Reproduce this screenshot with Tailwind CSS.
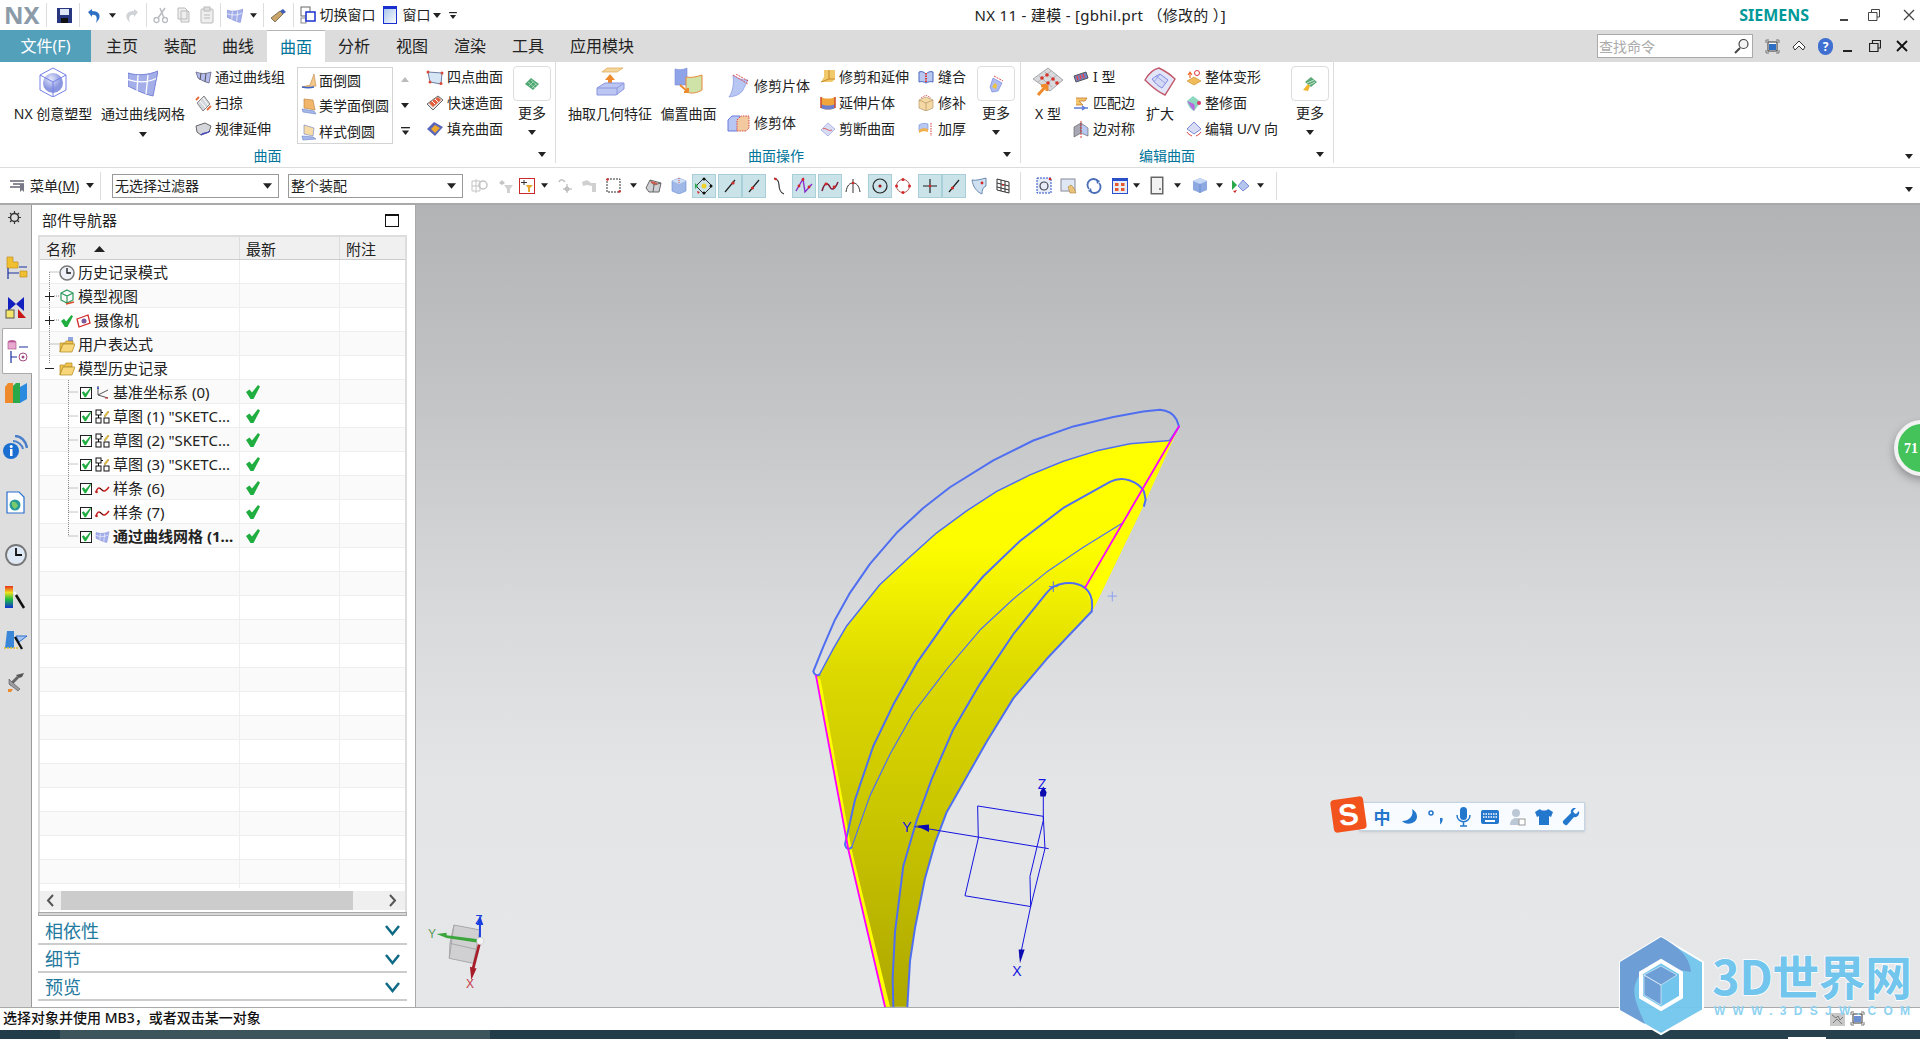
<!DOCTYPE html>
<html lang="zh-CN">
<head>
<meta charset="UTF-8">
<title>NX 11 - 建模</title>
<script src="https://cdn.jsdelivr.net/npm/@tailwindcss/browser@4"></script>
</head>
<body class="bg-white">
<svg class="hidden" width="0" height="0">
  <defs>
    <symbol id="caret" viewBox="0 0 8 5"><polygon points="0,0 8,0 4,5" fill="#222"/></symbol>
    <symbol id="caretbar" viewBox="0 0 10 9"><rect x="0" y="0" width="10" height="1.5" fill="#222"/><polygon points="1,4 9,4 5,9" fill="#222"/></symbol>
    <symbol id="tick" viewBox="0 0 14 14"><path d="M0 7l3.500-2.500 2.500 3L12 0l2 1.500L7.500 14H4.500z" fill="#1fae3f"/></symbol>
    <symbol id="box" viewBox="0 0 13 13"><rect x=".5" y=".5" width="12" height="12" fill="#fff" stroke="#111"/><path d="M2 6l2-1.500 2 2.500 5-6 1 1-5.500 9H5z" fill="#1fae3f"/></symbol>
    <symbol id="sketch" viewBox="0 0 15 15"><rect x="1" y="1" width="5" height="5" fill="#fff" stroke="#111"/><rect x="1" y="9" width="5" height="5" fill="#fff" stroke="#111"/><rect x="9" y="9" width="5" height="5" fill="#fff" stroke="#111"/><path d="M6 3.500h2M3.500 6v3" stroke="#111"/><path d="M9 7l4-5 1 1-4 5z" fill="#e8c23a" stroke="#a5841a" stroke-width=".5"/></symbol>
    <symbol id="spline" viewBox="0 0 15 15"><path d="M1 11c2-6 4-4 6-2s4 1 7-3" fill="none" stroke="#c62222" stroke-width="1.500"/><circle cx="1.500" cy="11" r="1.300" fill="#c62222"/><path d="M5 7l3 3" stroke="#222"/></symbol>
    <symbol id="mesh" viewBox="0 0 30 30"><path d="M0 6c10 3 20 2 30-2l-5 25C16 27 8 23 0 19z" fill="#a4afea" stroke="#7783d6"/><path d="M10 8l-1 16M20 8l-2 19M0 12.500c9 3 18 4 28-1" stroke="#fff" fill="none" stroke-width="1.300"/></symbol>
    <symbol id="greenchip" viewBox="0 0 16 16"><path d="M1 8l6-6 8 6-6 6z" fill="#4fa872"/><path d="M4 6l7 6M7 4l6 5M5 10l4-4M8 12l4-4" stroke="#b6dfc6" stroke-width=".8"/></symbol>
    <symbol id="tbline" viewBox="0 0 16 16"><path d="M3 14L13 2" stroke="#222" stroke-width="1.200"/><circle cx="11" cy="5" r="1.600" fill="#d62828"/></symbol>
    <symbol id="tbline2" viewBox="0 0 16 16"><path d="M3 14L13 2" stroke="#222" stroke-width="1.200"/><circle cx="6.500" cy="10" r="1.600" fill="#d62828"/></symbol>
  </defs>
</svg>

<div class="relative w-[1920px] h-[1039px] overflow-hidden flex flex-col text-[#222] font-['Noto_Sans','Noto_Sans_CJK_SC',sans-serif]">

  <!-- title bar -->
  <div class="h-[30px] flex items-center shrink-0 bg-white">
    <span class="ml-[4px] mr-[6px] text-[24px] leading-[28px] font-bold text-[#8c9ba8]">NX</span>
    <i class="w-px h-[24px] bg-[#ddd]"></i>
    <svg class="ml-[10px] w-[15px] h-[15px]" viewBox="0 0 15 15"><rect width="15" height="15" fill="#27367f"/><rect x="3" y="1" width="9" height="6" fill="#dfe6f6"/><rect x="4" y="10" width="7" height="5" fill="#111"/></svg>
    <i class="ml-[7px] w-px h-[24px] bg-[#ddd]"></i>
    <svg class="ml-[7px] w-[14px] h-[15px]" viewBox="0 0 14 15"><path d="M1 4l4-3v2c6 0 9 3 7 8l-3 4c2-6 0-9-4-8v2z" fill="#2d6fc4"/></svg>
    <svg class="ml-[8px] w-[7px] h-[5px]"><use href="#caret"/></svg>
    <svg class="ml-[9px] w-[14px] h-[15px]" viewBox="0 0 14 15"><path d="M13 4L9 1v2C3 3 0 6 2 11l3 4C3 9 5 6 9 7v2z" fill="#cfd2d6"/></svg>
    <i class="ml-[7px] w-px h-[24px] bg-[#ddd]"></i>
    <svg class="ml-[6px] w-[15px] h-[17px]" viewBox="0 0 15 17"><path d="M12 1L5 11M7 1l4 10" stroke="#b9bcc0" stroke-width="1.500"/><circle cx="3.500" cy="13" r="2.500" fill="none" stroke="#b9bcc0" stroke-width="1.300"/><circle cx="12" cy="13" r="2.500" fill="none" stroke="#b9bcc0" stroke-width="1.300"/></svg>
    <svg class="ml-[9px] w-[13px] h-[16px]" viewBox="0 0 13 16"><path d="M1 1h7l2 2v9H1zM4 4h7l1 1v10H4z" fill="#eee" stroke="#bbb"/></svg>
    <svg class="ml-[10px] w-[14px] h-[18px]" viewBox="0 0 14 18"><rect x="1" y="3" width="12" height="14" rx="1" fill="#eee" stroke="#bbb"/><rect x="4" y="1" width="6" height="4" fill="#ddd" stroke="#bbb"/><path d="M4 9h6M4 12h6" stroke="#bbb"/></svg>
    <i class="ml-[6px] w-px h-[24px] bg-[#ddd]"></i>
    <svg class="ml-[6px] w-[16px] h-[16px]"><use href="#mesh"/></svg>
    <svg class="ml-[7px] w-[7px] h-[5px]"><use href="#caret"/></svg>
    <i class="ml-[6px] w-px h-[24px] bg-[#ddd]"></i>
    <svg class="ml-[6px] w-[17px] h-[15px]" viewBox="0 0 17 15"><path d="M1 10l9-7 3 3-8 8z" fill="#c9a56a" stroke="#6a5a44" stroke-width=".8"/><path d="M10 3l3-2 3 3-3 2z" fill="#3f5fb5"/></svg>
    <i class="ml-[6px] w-px h-[24px] bg-[#ddd]"></i>
    <svg class="ml-[6px] w-[16px] h-[18px]" viewBox="0 0 16 18"><rect x="1" y="1" width="9" height="9" fill="#fff" stroke="#666"/><rect x="1" y="12" width="5" height="5" fill="#fff" stroke="#888"/><rect x="6" y="6" width="9" height="9" fill="#fff" stroke="#1a2fd0" stroke-width="1.500"/></svg>
    <span class="ml-[4px] text-[14px] leading-none">切换窗口</span>
    <svg class="ml-[7px] w-[14px] h-[18px]" viewBox="0 0 14 18"><defs><linearGradient id="wg" x1="0" y1="0" x2="1" y2="1"><stop offset="0" stop-color="#9fc0e8"/><stop offset="1" stop-color="#fff"/></linearGradient></defs><rect x=".5" y=".5" width="13" height="17" fill="url(#wg)" stroke="#1a2fd0"/><rect x="0" y="0" width="14" height="3" fill="#1a2fd0"/></svg>
    <span class="ml-[6px] text-[14px] leading-none">窗口</span>
    <svg class="ml-[2px] w-[8px] h-[5px]"><use href="#caret"/></svg>
    <svg class="ml-[8px] w-[8px] h-[7px]"><use href="#caretbar"/></svg>
    <span class="ml-[518px] text-[15px] leading-none tracking-[.3px] whitespace-nowrap">NX 11 - 建模 - [gbhil.prt （修改的 ）]</span>
    <span class="ml-auto text-[16px] leading-none font-bold text-[#009999]">SIEMENS</span>
    <i class="ml-[31px] mt-[10px] w-[8px] h-[2px] bg-[#444]"></i>
    <svg class="ml-[20px] w-[12px] h-[12px]" viewBox="0 0 12 12"><path d="M3.500 3V.5h8V8H9M.5 3.500h8.500V11.500H.5z" fill="none" stroke="#444"/></svg>
    <svg class="ml-[23px] mr-[5px] w-[12px] h-[12px]" viewBox="0 0 12 12"><path d="M1 1l10 10M11 1L1 11" stroke="#444" stroke-width="1.300"/></svg>
  </div>

  <!-- tabs -->
  <div class="h-[32px] flex items-center shrink-0 bg-[#dcdcdc] text-[16px]">
    <div class="w-[91px] h-full bg-[#53a0bb] text-white flex items-center justify-center">文件(F)</div>
    <div class="ml-[2px] flex h-full">
      <div class="w-[58px] flex items-center justify-center">主页</div>
      <div class="w-[58px] flex items-center justify-center">装配</div>
      <div class="w-[58px] flex items-center justify-center">曲线</div>
      <div class="w-[58px] flex items-center justify-center bg-white text-[#00749a] border-t border-[#b5b5b5]">曲面</div>
      <div class="w-[58px] flex items-center justify-center">分析</div>
      <div class="w-[58px] flex items-center justify-center">视图</div>
      <div class="w-[58px] flex items-center justify-center">渲染</div>
      <div class="w-[58px] flex items-center justify-center">工具</div>
      <div class="w-[90px] flex items-center justify-center">应用模块</div>
    </div>
    <div class="ml-auto w-[156px] h-[24px] bg-white border border-[#aaa] flex items-center text-[14px] text-[#aaa] pl-[1px]">查找命令
      <svg class="ml-auto mr-[3px] w-[15px] h-[16px]" viewBox="0 0 15 16"><circle cx="9.500" cy="6" r="4.500" fill="#f4f4f4" stroke="#444" stroke-width="1.200"/><path d="M6 10l-5 5" stroke="#444" stroke-width="2"/></svg>
    </div>
    <svg class="ml-[12px] w-[15px] h-[15px]" viewBox="0 0 15 15"><path d="M1 4V1h3M11 1h3v3M1 11v3h3M14 11v3h-3" fill="none" stroke="#777"/><rect x="3" y="3" width="9" height="9" fill="#fff" stroke="#333"/><rect x="4" y="5" width="7" height="6" fill="#2d6fc4"/></svg>
    <svg class="ml-[12px] w-[14px] h-[12px]" viewBox="0 0 14 12"><path d="M1 7l6-6 6 6-2 3-4-4-4 4z" fill="#fff" stroke="#333"/></svg>
    <span class="ml-[12px] w-[15px] h-[17px] rounded-full bg-[#3f6fd0] text-white text-[12px] leading-[17px] font-bold text-center">?</span>
    <i class="ml-[10px] mt-[10px] w-[9px] h-[2px] bg-[#222]"></i>
    <svg class="ml-[17px] w-[12px] h-[12px]" viewBox="0 0 12 12"><path d="M3.500 3V.5h8V8H9M.5 3.500h8.500V11.500H.5z" fill="none" stroke="#222" stroke-width="1.200"/></svg>
    <svg class="ml-[15px] mr-[12px] w-[12px] h-[12px]" viewBox="0 0 12 12"><path d="M1 1l10 10M11 1L1 11" stroke="#111" stroke-width="1.800"/></svg>
  </div>

  <!-- ribbon -->
  <div class="h-[106px] shrink-0 flex bg-white border-b border-[#dcdcdc] text-[14px] leading-none relative">
    <!-- group: 曲面 -->
    <div class="w-[556px] shrink-0 flex flex-col border-r border-[#ddd] mb-[4px]">
      <div class="h-[85px] flex">
        <div class="ml-[13px] w-[80px] flex flex-col items-center pt-[5px]">
          <svg class="w-[30px] h-[30px]" viewBox="0 0 30 30"><defs><radialGradient id="ball" cx=".4" cy=".3"><stop offset="0" stop-color="#e4e7fb"/><stop offset="1" stop-color="#8a97e0"/></radialGradient></defs><circle cx="15" cy="16" r="10" fill="url(#ball)"/><path d="M15 1l13 7v15l-13 7-13-7V8zM2 8l13 7 13-7M15 15v15" fill="none" stroke="#7480e6"/></svg>
          <span class="mt-[10px]">NX 创意塑型</span>
        </div>
        <div class="ml-[8px] w-[84px] flex flex-col items-center pt-[5px]">
          <svg class="w-[30px] h-[30px]"><use href="#mesh"/></svg>
          <span class="mt-[10px] whitespace-nowrap">通过曲线网格</span>
          <svg class="mt-[11px] w-[8px] h-[5px]"><use href="#caret"/></svg>
        </div>
        <div class="ml-[10px] w-[102px] flex flex-col pt-[2px]">
          <div class="h-[26px] flex items-center gap-[3px]"><svg class="w-[17px] h-[14px]" viewBox="0 0 17 14"><path d="M1 2c5 2 10 2 15 0l-2 11c-4-1-8-3-11-5z" fill="#b4bced" stroke="#7a7a9a"/><path d="M6 3L5 10M11 3l-1 9" stroke="#555" fill="none"/></svg>通过曲线组</div>
          <div class="h-[26px] flex items-center gap-[3px]"><svg class="w-[17px] h-[17px]" viewBox="0 0 17 17"><path d="M2 8l7-7 6 8-7 7z" fill="#d4d6de" stroke="#888"/><path d="M5 6l6 7M8 3l5 7" stroke="#fff"/><path d="M1 5l3-3M12 15l4-4" stroke="#e8693a" stroke-width="1.800"/></svg>扫掠</div>
          <div class="h-[26px] flex items-center gap-[3px]"><svg class="w-[17px] h-[14px]" viewBox="0 0 17 14"><path d="M1 4l9-3 6 3-2 6-8 3-4-3z" fill="#d5d6dc" stroke="#666"/><path d="M6 13c3-3 6-1 9-4" stroke="#4a4ac0" fill="none" stroke-width="1.300"/></svg>规律延伸</div>
        </div>
        <div class="mt-[5px] w-[96px] h-[77px] border border-[#d4d4d4] px-[3px] flex flex-col">
          <div class="h-[25px] shrink-0 flex items-center gap-[2px]"><svg class="w-[16px] h-[16px]" viewBox="0 0 16 16"><path d="M1 14l8-2 4-11 2 12z" fill="#f4c78a" stroke="#b98a4a" stroke-width=".6"/><path d="M1 14c4 1 8 1 12 0" stroke="#3f66c4" stroke-width="1.500" fill="none"/></svg>面倒圆</div>
          <div class="h-[26px] shrink-0 flex items-center gap-[2px] whitespace-nowrap"><svg class="w-[16px] h-[17px]" viewBox="0 0 16 17"><path d="M3 1l9 1 2 10-11-2z" fill="#f2b66b" stroke="#b57a33" stroke-width=".6"/><path d="M1 11l12 2 2 3-13-2z" fill="#a5b9ea" stroke="#6b82c8" stroke-width=".6"/></svg>美学面倒圆</div>
          <div class="h-[26px] shrink-0 flex items-center gap-[2px]"><svg class="w-[16px] h-[17px]" viewBox="0 0 16 17"><path d="M3 1l10 3-1 8-9-2z" fill="#f7dca5" stroke="#6b82c8" stroke-width=".6"/><path d="M1 12l11 1 3 2-13 1z" fill="#a5b9ea" stroke="#6b82c8" stroke-width=".6"/></svg>样式倒圆</div>
        </div>
        <div class="ml-[5px] w-[14px] flex flex-col items-center pt-[15px]">
          <svg class="w-[8px] h-[5px]" viewBox="0 0 8 5"><polygon points="0,5 8,5 4,0" fill="#bbb"/></svg>
          <svg class="mt-[21px] w-[8px] h-[5px]"><use href="#caret"/></svg>
          <svg class="mt-[19px] w-[9px] h-[8px]"><use href="#caretbar"/></svg>
        </div>
        <div class="ml-[14px] w-[80px] flex flex-col pt-[2px]">
          <div class="h-[26px] flex items-center gap-[3px] whitespace-nowrap"><svg class="w-[18px] h-[15px]" viewBox="0 0 18 15"><path d="M2 2l14 1-1 11-11-2z" fill="#d7e6f5" stroke="#6c7fa8"/><g fill="#d94a3a"><circle cx="2" cy="2" r="1.500"/><circle cx="16" cy="3" r="1.500"/><circle cx="15" cy="13.500" r="1.500"/><circle cx="4" cy="12" r="1.500"/></g></svg>四点曲面</div>
          <div class="h-[26px] flex items-center gap-[3px] whitespace-nowrap"><svg class="w-[18px] h-[16px]" viewBox="0 0 18 16"><path d="M1 9l11-8 5 4-10 10z" fill="#e5e5e5" stroke="#666"/><path d="M3 8l9-6 3 3-8 7z" fill="#e2603f"/><path d="M6 6l3 3M9 4l3 3" stroke="#fff"/></svg>快速造面</div>
          <div class="h-[26px] flex items-center gap-[3px] whitespace-nowrap"><svg class="w-[18px] h-[16px]" viewBox="0 0 18 16"><path d="M1 8l7-7 9 5-8 9z" fill="#5b66b8"/><path d="M5 8l4-4 5 3-5 5z" fill="#efa92c"/></svg>填充曲面</div>
        </div>
        <div class="ml-[7px] w-[38px] flex flex-col items-center pt-[4px]">
          <div class="w-[38px] h-[35px] border border-[#ddd] rounded-[4px] flex items-center justify-center"><svg class="w-[16px] h-[16px]"><use href="#greenchip"/></svg></div>
          <span class="mt-[5px] whitespace-nowrap">更多</span>
          <svg class="mt-[10px] w-[8px] h-[5px]"><use href="#caret"/></svg>
        </div>
      </div>
      <div class="flex-1 relative flex items-center justify-center text-[#00749a] pt-[4px] pr-[20px]">曲面<svg class="absolute left-[538px] top-[7px] w-[8px] h-[5px]"><use href="#caret"/></svg></div>
    </div>

    <!-- group: 曲面操作 -->
    <div class="w-[465px] shrink-0 flex flex-col border-r border-[#ddd] mb-[4px]">
      <div class="h-[85px] flex">
        <div class="ml-[12px] w-[84px] flex flex-col items-center pt-[5px]">
          <svg class="w-[30px] h-[30px]" viewBox="0 0 30 30"><path d="M7 5l5-4h16l-6 4z" fill="#f4d79a" stroke="#e0a050" stroke-width=".7"/><path d="M15 7l5 6h-3v7h-4v-7h-3z" fill="#ef8a2c"/><path d="M2 21l8-5h19v6l-8 6H2z" fill="#bcc6f2" stroke="#8a96e0"/><path d="M2 21h20l7-5M22 21v7" stroke="#8a96e0" fill="none"/></svg>
          <span class="mt-[10px] whitespace-nowrap">抽取几何特征</span>
        </div>
        <div class="ml-[9px] w-[55px] flex flex-col items-center pt-[5px]">
          <svg class="w-[30px] h-[30px]" viewBox="0 0 30 30"><path d="M1 2c4 1 8 1 12-1v17H1z" fill="#8fa3e8" stroke="#7a8ad8" stroke-width=".6"/><path d="M12 10c5 1 10 0 16-2v15c-5 3-10 4-16 2z" fill="#cfe3a8" stroke="#e8863a"/><path d="M6 18l8 7M14 25v-4M14 25h-4" stroke="#ef8a2c" stroke-width="2" fill="none"/></svg>
          <span class="mt-[10px] whitespace-nowrap">偏置曲面</span>
        </div>
        <div class="ml-[11px] w-[84px] flex flex-col pt-[11px] gap-[11px]">
          <div class="h-[26px] flex items-center gap-[4px] whitespace-nowrap"><svg class="w-[23px] h-[24px]" viewBox="0 0 23 24"><path d="M6 1c3 3 9 5 15 5l-4 8c-2 5-6 8-15 9 4-6 5-14 4-22z" fill="#b8c6f4" stroke="#7a8ad8" stroke-width=".6"/><path d="M6 1l15 9M9 0l12 7" stroke="#e04a4a" stroke-dasharray="2 1"/></svg>修剪片体</div>
          <div class="h-[26px] flex items-center gap-[4px] whitespace-nowrap"><svg class="w-[23px] h-[17px]" viewBox="0 0 23 17"><path d="M1 5l4-4h8v12l-3 3H1z" fill="#b8c6f4" stroke="#6a7ad8"/><path d="M10 5l4-4h8v12l-3 3h-9z" fill="#f3c9a0" stroke="#d04a4a" stroke-dasharray="1.500 1"/></svg>修剪体</div>
        </div>
        <div class="ml-[9px] w-[90px] flex flex-col pt-[2px]">
          <div class="h-[26px] flex items-center gap-[3px] whitespace-nowrap"><svg class="w-[16px] h-[16px]" viewBox="0 0 16 16"><path d="M4 1h11v9l-3 3H1l3-5z" fill="#f0c96b"/><path d="M9 1v9M1 13l8-3 6 0" stroke="#c88a2a" fill="none"/></svg>修剪和延伸</div>
          <div class="h-[26px] flex items-center gap-[3px] whitespace-nowrap"><svg class="w-[16px] h-[16px]" viewBox="0 0 16 16"><path d="M1 2c4 2 10 2 14 0v11c-4 2-10 2-14 0z" fill="#f0a63c"/><path d="M1 9c4 2 10 2 14 0v4c-4 2-10 2-14 0z" fill="#6b7fd0"/><path d="M1 2v11M15 2v11" stroke="#d04a2a" stroke-width="1.500"/></svg>延伸片体</div>
          <div class="h-[26px] flex items-center gap-[3px] whitespace-nowrap"><svg class="w-[16px] h-[15px]" viewBox="0 0 16 15"><path d="M1 8l7-7 7 6-7 7z" fill="#d8dcf4" stroke="#8a96d8" stroke-width=".6"/><path d="M3 7c3-2 5 3 9 1" stroke="#d85a5a" fill="none"/></svg>剪断曲面</div>
        </div>
        <div class="ml-[8px] w-[50px] flex flex-col pt-[2px]">
          <div class="h-[26px] flex items-center gap-[4px] whitespace-nowrap"><svg class="w-[16px] h-[14px]" viewBox="0 0 16 14"><path d="M1 2c3-1 5 0 7 2 2-2 4-3 7-2v10c-3-1-5 0-7 1-2-1-4-2-7-1z" fill="#b9c8f0" stroke="#4a6ac0"/><path d="M8 3v10" stroke="#d83a3a" stroke-width="2" stroke-dasharray="1.500 1"/></svg>缝合</div>
          <div class="h-[26px] flex items-center gap-[4px] whitespace-nowrap"><svg class="w-[16px] h-[16px]" viewBox="0 0 16 16"><path d="M1 5l7-3 7 3v8l-7 3-7-3z" fill="#f5d9a4" stroke="#a88a5a" stroke-width=".6"/><path d="M1 5l7 3 7-3M8 8v8" stroke="#a88a5a" fill="none" stroke-width=".6"/><path d="M3 3l5-3 5 3" stroke="#d83a3a" fill="none" stroke-dasharray="1 1"/></svg>修补</div>
          <div class="h-[26px] flex items-center gap-[4px] whitespace-nowrap"><svg class="w-[16px] h-[15px]" viewBox="0 0 16 15"><path d="M1 3c3-2 6-2 9-1v6c-3-1-6-1-9 1z" fill="#b9c8f0" stroke="#6a8ad0" stroke-width=".6"/><path d="M1 8c3-2 6-2 9-1v3c-3-1-6-1-9 1z" fill="#f0b04a"/><path d="M13 1v13" stroke="#d83a3a" stroke-dasharray="1.500 1"/></svg>加厚</div>
        </div>
        <div class="ml-[9px] w-[38px] flex flex-col items-center pt-[4px]">
          <div class="w-[38px] h-[35px] border border-[#ddd] rounded-[4px] flex items-center justify-center"><svg class="w-[16px] h-[18px]" viewBox="0 0 16 18"><path d="M5 3l9 5-4 8-6 1-2-5z" fill="#aebcf0" stroke="#6a7ad8" stroke-width=".6"/><path d="M6 1l9 5" stroke="#e04a4a" stroke-dasharray="2 1"/><path d="M4 12l3-4 2 2-1 4z" fill="#efc23a"/></svg></div>
          <span class="mt-[5px] whitespace-nowrap">更多</span>
          <svg class="mt-[10px] w-[8px] h-[5px]"><use href="#caret"/></svg>
        </div>
      </div>
      <div class="flex-1 relative flex items-center justify-center text-[#00749a] pt-[4px] pr-[24px]">曲面操作<svg class="absolute left-[447px] top-[7px] w-[8px] h-[5px]"><use href="#caret"/></svg></div>
    </div>

    <!-- group: 编辑曲面 -->
    <div class="w-[313px] shrink-0 flex flex-col border-r border-[#ddd] mb-[4px]">
      <div class="h-[85px] flex">
        <div class="ml-[11px] w-[32px] flex flex-col items-center pt-[5px]">
          <svg class="w-[32px] h-[30px]" viewBox="0 0 32 30"><path d="M1 12L16 1l15 12-13 11z" fill="#d7d9dd" stroke="#777" stroke-width=".6"/><path d="M7 9l13 11M13 5l12 11M6 15L19 4M12 19l13-11" stroke="#999" stroke-width=".6"/><g fill="#d8342a"><circle cx="10" cy="11" r="1.800"/><circle cx="15" cy="8" r="1.800"/><circle cx="21" cy="12" r="1.800"/><circle cx="16" cy="16" r="1.800"/><circle cx="25" cy="16" r="1.800"/></g><path d="M6 28l9-10M15 18l-6 1M15 18v6" stroke="#ef8a2c" stroke-width="3" fill="none"/></svg>
          <span class="mt-[10px] whitespace-nowrap">X 型</span>
        </div>
        <div class="ml-[9px] w-[64px] flex flex-col pt-[2px]">
          <div class="h-[26px] flex items-center gap-[4px] whitespace-nowrap"><svg class="w-[16px] h-[12px]" viewBox="0 0 16 12"><path d="M1 5l12-4 2 6-12 4z" fill="#7280c8" stroke="#555"/><path d="M4 5l1 4M7 4l1 4M10 3l1 4" stroke="#e04a4a" stroke-width="1.500"/></svg>I 型</div>
          <div class="h-[26px] flex items-center gap-[4px] whitespace-nowrap"><svg class="w-[16px] h-[16px]" viewBox="0 0 16 16"><path d="M3 3h11l-2 3H6l4 4H3" fill="#f2c46b" stroke="#c47a2a" stroke-width=".8"/><path d="M1 13h14M9 11l3 2-3 2" stroke="#5a7ad8" fill="none" stroke-width="1.500"/></svg>匹配边</div>
          <div class="h-[26px] flex items-center gap-[4px] whitespace-nowrap"><svg class="w-[16px] h-[17px]" viewBox="0 0 16 17"><path d="M1 6l7-4v10l-7 4z" fill="#a8a8b4" stroke="#555" stroke-width=".6"/><path d="M8 2l7 5v8l-7-3z" fill="#b9c8f0" stroke="#555" stroke-width=".6"/><path d="M8 0v17" stroke="#d83a3a" stroke-dasharray="2 1"/></svg>边对称</div>
        </div>
        <div class="ml-[7px] w-[32px] flex flex-col items-center pt-[5px]">
          <svg class="w-[32px] h-[30px]" viewBox="0 0 32 30"><path d="M1 13C5 6 10 2 15 1c6 3 12 7 16 11l-10 16C14 25 7 19 1 13z" fill="#e3e5f8" stroke="#c25a6a" stroke-width="1.400"/><path d="M8 12c4-3 6-4 8-5l8 6-6 8c-4-2-7-5-10-9z" fill="#d4d9f5" stroke="#7f8ae0"/><path d="M12 9l9 7M16 7l-6 8" stroke="#7f8ae0" stroke-width=".7"/></svg>
          <span class="mt-[10px] whitespace-nowrap">扩大</span>
        </div>
        <div class="ml-[10px] w-[96px] flex flex-col pt-[2px]">
          <div class="h-[26px] flex items-center gap-[3px] whitespace-nowrap"><svg class="w-[16px] h-[17px]" viewBox="0 0 16 17"><path d="M1 12l7-4 7 4-7 4z" fill="#f0bb58" stroke="#c88a2a" stroke-width=".6"/><path d="M4 9V4M2 6l2-3 2 3" stroke="#ef6a2c" fill="none" stroke-width="1.200"/><circle cx="11" cy="4" r="2.500" fill="none" stroke="#d83a3a"/></svg>整体变形</div>
          <div class="h-[26px] flex items-center gap-[3px] whitespace-nowrap"><svg class="w-[16px] h-[17px]" viewBox="0 0 16 17"><path d="M1 6l6-5 8 6-7 9c-4-2-6-5-7-10z" fill="#8fd8c0"/><path d="M1 6c2 3 4 6 7 10 1-3 1-5 0-7z" fill="#b56ae0"/><circle cx="13" cy="8" r="2" fill="#d83a6a"/></svg>整修面</div>
          <div class="h-[26px] flex items-center gap-[3px] whitespace-nowrap"><svg class="w-[16px] h-[17px]" viewBox="0 0 16 17"><path d="M1 8l7-7 7 7-7 5z" fill="#d8dcf4" stroke="#7a8ad8"/><path d="M1 11c1 2 3 3 5 4M15 11c-1 2-3 3-5 4" stroke="#d83a3a" fill="none"/></svg>编辑 U/V 向</div>
        </div>
        <div class="ml-[9px] w-[38px] flex flex-col items-center pt-[4px]">
          <div class="w-[38px] h-[35px] border border-[#ddd] rounded-[4px] flex items-center justify-center"><svg class="w-[16px] h-[16px]" viewBox="0 0 16 16"><path d="M3 6l6-5 6 5-6 5z" fill="#5ba878"/><path d="M5 7l7-3M7 9l6-3" stroke="#c0e4cc"/><path d="M1 14l5-6 2 2-2 5z" fill="#efb52c"/></svg></div>
          <span class="mt-[5px] whitespace-nowrap">更多</span>
          <svg class="mt-[10px] w-[8px] h-[5px]"><use href="#caret"/></svg>
        </div>
      </div>
      <div class="flex-1 relative flex items-center justify-center text-[#00749a] pt-[4px] pr-[20px]">编辑曲面<svg class="absolute left-[295px] top-[7px] w-[8px] h-[5px]"><use href="#caret"/></svg></div>
    </div>
    <svg class="absolute left-[1905px] top-[92px] w-[8px] h-[5px]"><use href="#caret"/></svg>
  </div>

  <!-- selection toolbar -->
  <div class="h-[35px] shrink-0 flex items-center bg-white text-[14px] leading-none relative">
    <svg class="ml-[9px] w-[16px] h-[14px]" viewBox="0 0 16 14"><path d="M1 2h14M4 5h11M1 8h14" stroke="#667" stroke-width="1.500"/><path d="M11 5v8l2-2 2 2V5z" fill="#778"/></svg>
    <span class="ml-[5px] w-[52px]">菜单(<u>M</u>)</span>
    <svg class="ml-[4px] w-[8px] h-[5px]"><use href="#caret"/></svg>
    <i class="ml-[6px] w-px h-[28px] bg-[#ddd]"></i>
    <div class="ml-[11px] w-[167px] h-[24px] border border-[#999] flex items-center pl-[2px]">无选择过滤器<svg class="ml-auto mr-[6px] w-[9px] h-[6px]"><use href="#caret"/></svg></div>
    <div class="ml-[9px] w-[175px] h-[24px] border border-[#999] flex items-center pl-[2px]">整个装配<svg class="ml-auto mr-[6px] w-[9px] h-[6px]"><use href="#caret"/></svg></div>
    <svg class="ml-[8px] w-[17px] h-[16px]" viewBox="0 0 17 16"><path d="M1 3h8v10H1zM1 8h8M5 1v14" fill="none" stroke="#c4c4c4"/><circle cx="12" cy="7" r="4" fill="none" stroke="#c4c4c4" stroke-width="1.500"/></svg>
    <svg class="ml-[10px] w-[15px] h-[15px]" viewBox="0 0 15 15"><path d="M6 7h9l-3 4v4h-3v-4z" fill="#d0d0d0"/><path d="M1 5l3-3 3 3-3 2z" fill="#c4c4c4"/></svg>
    <svg class="ml-[6px] w-[16px] h-[16px]" viewBox="0 0 16 16"><rect x=".5" y=".5" width="15" height="15" fill="#fff" stroke="#c92a2a"/><path d="M7 7h7l-3 3v4H9v-4z" fill="#e8a72c"/><path d="M5 2v5M2 4.500h6" stroke="#333"/></svg>
    <svg class="ml-[6px] w-[7px] h-[5px]"><use href="#caret"/></svg>
    <svg class="ml-[10px] w-[15px] h-[16px]" viewBox="0 0 15 16"><path d="M1 4c1-3 4-3 6 0" fill="none" stroke="#c0c0c0" stroke-width="1.500"/><path d="M9 6v9M5 11h9" stroke="#b0b0b0"/><circle cx="9" cy="11" r="2" fill="none" stroke="#b0b0b0"/></svg>
    <svg class="ml-[8px] w-[17px] h-[15px]" viewBox="0 0 17 15"><path d="M1 4l5-2 4 3 5 0v9h-4V8L6 7 2 8z" fill="#d0d0d0"/></svg>
    <svg class="ml-[8px] w-[15px] h-[15px]" viewBox="0 0 15 15"><rect x="1" y="1" width="13" height="13" fill="none" stroke="#333" stroke-dasharray="2 1"/><circle cx="1.500" cy="1.500" r="1.200" fill="#d62828"/><circle cx="13.500" cy="13.500" r="1.200" fill="#d62828"/></svg>
    <svg class="ml-[9px] w-[7px] h-[5px]"><use href="#caret"/></svg>
    <svg class="ml-[8px] w-[17px] h-[15px]" viewBox="0 0 17 15"><path d="M1 10l4-8 11 3-2 9-10 0z" fill="#cfd0d3" stroke="#666"/><path d="M5 2l4 5 7-2M9 7l-1 7" stroke="#666" fill="none"/><path d="M6 4l6 2" stroke="#d05a4a" stroke-width="2"/></svg>
    <svg class="ml-[9px] w-[16px] h-[17px]" viewBox="0 0 16 17"><path d="M1 4l7-3 7 3v10l-7 3-7-3z" fill="#9fb8e8" stroke="#6a8ad0" stroke-width=".6"/><path d="M1 4l7 3 7-3-7-3z" fill="#cfe0f6"/><path d="M8 1v6" stroke="#d83a3a" stroke-dasharray="1 1"/></svg>
    <div class="ml-[5px] w-[24px] h-[24px] bg-[#c9e3e9] border border-[#a9d0d9] flex items-center justify-center"><svg class="w-[18px] h-[18px]" viewBox="0 0 18 18"><path d="M9 1l8 8-8 8-8-8z" fill="none" stroke="#333"/><circle cx="9" cy="9" r="2.500" fill="#efd02c"/><circle cx="9" cy="2" r="1.500" fill="#111"/><circle cx="16" cy="9" r="1.500" fill="#111"/><circle cx="9" cy="16" r="1.500" fill="#111"/><path d="M0 6l3 3-3 3z" fill="#2ba84a"/><path d="M2 14l3 1-2 2z" fill="#d62828"/></svg></div>
    <div class="ml-[2px] w-[24px] h-[24px] bg-[#c9e3e9] border border-[#a9d0d9] flex items-center justify-center"><svg class="w-[16px] h-[16px]"><use href="#tbline"/></svg></div>
    <div class="w-[24px] h-[24px] bg-[#c9e3e9] border border-[#a9d0d9] flex items-center justify-center"><svg class="w-[16px] h-[16px]"><use href="#tbline2"/></svg></div>
    <svg class="ml-[5px] w-[16px] h-[18px]" viewBox="0 0 16 18"><path d="M3 1c3 1 5 3 5 7s2 8 5 9" fill="none" stroke="#333" stroke-width="1.200"/><circle cx="4.500" cy="2" r="1.300" fill="#d62828"/></svg>
    <div class="ml-[5px] w-[24px] h-[24px] bg-[#c9e3e9] border border-[#a9d0d9] flex items-center justify-center"><svg class="w-[18px] h-[18px]" viewBox="0 0 18 18"><path d="M1 14L8 2l2 13 7-8" fill="none" stroke="#8a2fc8" stroke-width="1.400"/><g fill="#d62828"><circle cx="4" cy="9" r="1.400"/><circle cx="8" cy="2.500" r="1.400"/><circle cx="14" cy="10" r="1.400"/></g></svg></div>
    <div class="ml-[2px] w-[24px] h-[24px] bg-[#c9e3e9] border border-[#a9d0d9] flex items-center justify-center"><svg class="w-[18px] h-[14px]" viewBox="0 0 18 14"><path d="M1 12c3-10 6-8 8-4s5 2 8-5" fill="none" stroke="#7c1d3c" stroke-width="1.500"/><circle cx="5" cy="5" r="1.400" fill="#d62828"/><circle cx="13" cy="8" r="1.400" fill="#d62828"/></svg></div>
    <svg class="ml-[3px] w-[16px] h-[16px]" viewBox="0 0 16 16"><path d="M1 14C2 7 5 5 8 5s6 2 7 9M8 1v14" fill="none" stroke="#333"/><circle cx="8" cy="5" r="1.300" fill="#d62828"/></svg>
    <div class="ml-[7px] w-[24px] h-[24px] bg-[#c9e3e9] border border-[#a9d0d9] flex items-center justify-center"><svg class="w-[16px] h-[16px]" viewBox="0 0 16 16"><circle cx="8" cy="8" r="7" fill="none" stroke="#222" stroke-width="1.200"/><circle cx="8" cy="8" r="1.600" fill="#a31515"/></svg></div>
    <svg class="ml-[3px] w-[16px] h-[16px]" viewBox="0 0 16 16"><circle cx="8" cy="8" r="6.500" fill="none" stroke="#a55"/><g fill="#d62828"><circle cx="8" cy="1.500" r="1.500"/><circle cx="14.500" cy="8" r="1.500"/><circle cx="8" cy="14.500" r="1.500"/><circle cx="1.500" cy="8" r="1.500"/></g></svg>
    <div class="ml-[7px] w-[24px] h-[24px] bg-[#c9e3e9] border border-[#a9d0d9] flex items-center justify-center"><svg class="w-[16px] h-[16px]" viewBox="0 0 16 16"><path d="M1 8h14M8 1v14" stroke="#222" stroke-width="1.200"/><circle cx="8" cy="8" r="1.300" fill="#d62828"/></svg></div>
    <div class="w-[24px] h-[24px] bg-[#c9e3e9] border border-[#a9d0d9] flex items-center justify-center"><svg class="w-[16px] h-[16px]"><use href="#tbline2"/></svg></div>
    <svg class="ml-[5px] w-[16px] h-[18px]" viewBox="0 0 16 18"><path d="M1 3c4 1 10-1 14-2v8c-3 1-4 4-4 8-5-2-9-7-10-14z" fill="#cfe0f0" stroke="#6a8ab0"/><circle cx="11" cy="6" r="1.400" fill="#d62828"/></svg>
    <svg class="ml-[9px] w-[14px] h-[16px]" viewBox="0 0 14 16"><path d="M1 1l12 3v11L1 12zM5 2v11M9 3v11M1 5l12 3M1 9l12 3" fill="none" stroke="#333"/><circle cx="7" cy="7" r="1" fill="#d62828"/></svg>
    <i class="ml-[10px] w-px h-[28px] bg-[#ddd]"></i>
    <svg class="ml-[15px] w-[16px] h-[17px]" viewBox="0 0 16 17"><rect x="1" y="1" width="14" height="15" fill="#e8eef8" stroke="#2a4fc8" stroke-dasharray="2 1"/><circle cx="8" cy="9" r="4" fill="none" stroke="#445" stroke-width="1.200"/><circle cx="14" cy="2" r="1.300" fill="#d62828"/></svg>
    <svg class="ml-[8px] w-[17px] h-[16px]" viewBox="0 0 17 16"><rect x="1" y="1" width="14" height="12" fill="#dfe7f5" stroke="#889"/><path d="M8 9l3-2 3 3 2 5h-6z" fill="#eac27a" stroke="#a5853f" stroke-width=".6"/></svg>
    <svg class="ml-[9px] w-[16px] h-[16px]" viewBox="0 0 16 16"><path d="M3 11A6 6 0 0 1 12 3M13 5a6 6 0 0 1-9 8" fill="none" stroke="#4a6fb8" stroke-width="1.800"/><path d="M10 1l4 2-3 3zM6 15l-4-2 3-3z" fill="#4a6fb8"/></svg>
    <svg class="ml-[10px] w-[16px] h-[16px]" viewBox="0 0 16 16"><rect x=".5" y=".5" width="15" height="15" fill="#e8eef8" stroke="#2a4fc8"/><rect x="0" y="0" width="16" height="3" fill="#2a4fc8"/><g fill="#e8582c"><rect x="3" y="5" width="3.500" height="3"/><rect x="9" y="5" width="3.500" height="3"/><rect x="3" y="10" width="3.500" height="3"/><rect x="9" y="10" width="3.500" height="3"/></g></svg>
    <svg class="ml-[5px] w-[7px] h-[5px]"><use href="#caret"/></svg>
    <svg class="ml-[10px] w-[14px] h-[19px]" viewBox="0 0 14 19"><path d="M.5.500h13v18H.5z" fill="#666"/><path d="M2 2h10v15H2z" fill="#f2f2f2"/><circle cx="10" cy="13" r="1" fill="#666"/></svg>
    <svg class="ml-[10px] w-[7px] h-[5px]"><use href="#caret"/></svg>
    <svg class="ml-[11px] w-[16px] h-[17px]" viewBox="0 0 16 17"><path d="M1 4l7-3 7 3v9l-7 3-7-3z" fill="#8ea9e2"/><path d="M1 4l7 3 7-3-7-3z" fill="#c7d8f5"/><path d="M8 7v9" stroke="#6a8ad0"/></svg>
    <svg class="ml-[8px] w-[7px] h-[5px]"><use href="#caret"/></svg>
    <svg class="ml-[9px] w-[17px] h-[15px]" viewBox="0 0 17 15"><path d="M0 2l5 5-5 5z" fill="#2ba84a"/><path d="M1 13l4-1-2 3z" fill="#d62828"/><path d="M6 8l5-6 6 6-6 5z" fill="#b4c6ee" stroke="#7a8ad8"/></svg>
    <svg class="ml-[8px] w-[7px] h-[5px]"><use href="#caret"/></svg>
    <i class="ml-[12px] w-px h-[28px] bg-[#ddd]"></i>
    <svg class="absolute left-[1905px] top-[19px] w-[8px] h-[5px]"><use href="#caret"/></svg>
  </div>

  <!-- main -->
  <div class="flex-1 min-h-0 flex border-t-2 border-[#a9a9a9]">
    <!-- left rail -->
    <div class="w-[32px] shrink-0 bg-[#dedede] border-r border-[#9a9a9a] flex flex-col items-start">
      <div class="w-full h-[24px] flex items-center justify-center pr-[3px]"><svg class="w-[13px] h-[13px]" viewBox="0 0 13 13"><circle cx="6.500" cy="6.500" r="4" fill="none" stroke="#333" stroke-width="1.500"/><path d="M6.500 0v3M6.500 10v3M0 6.500h3M10 6.500h3M2 2l2 2M9 9l2 2M11 2L9 4M4 9l-2 2" stroke="#333" stroke-width="1.200"/></svg></div>
      <div class="mt-[22px] w-full h-[32px] flex items-center justify-center"><svg class="w-[24px] h-[25px]" viewBox="0 0 24 25"><path d="M3 2h6v5h5v6H3z" fill="#f0c030" stroke="#c09020" stroke-width=".7"/><path d="M16 16h7v6h-7z" fill="#f0c030" stroke="#c09020" stroke-width=".7"/><path d="M4 13v11M4 18h11M15 12h8" stroke="#1a2fa0" stroke-width="1.200"/></svg></div>
      <div class="mt-[9px] w-full h-[32px] flex items-center justify-center"><svg class="w-[22px] h-[24px]" viewBox="0 0 22 24"><path d="M3 1l8 7 8-7v14l-8-7-8 7z" fill="#1220c0"/><rect x="1" y="14" width="8" height="8" fill="#f5e66a" stroke="#555"/><path d="M13 13l8 9h-8z" fill="#c81818"/></svg></div>
      <div class="mt-[4px] w-full h-[46px] bg-white border border-r-0 border-[#aaa] rounded-l-[2px] ml-[2px] flex items-center justify-center"><svg class="w-[22px] h-[24px]" viewBox="0 0 22 24"><ellipse cx="5" cy="3" rx="4" ry="2" fill="#c060a0"/><rect x="1" y="3" width="8" height="7" fill="#e8a8d0" stroke="#a04a80" stroke-width=".6"/><path d="M4 12v12M4 18h6M12 8h9" stroke="#1a2fa0" stroke-width="1.200"/><circle cx="16" cy="18" r="4" fill="none" stroke="#a04a80"/><circle cx="16" cy="18" r="1.500" fill="#a04a80"/></svg></div>
      <div class="mt-[3px] w-full h-[32px] flex items-center justify-center"><svg class="w-[24px] h-[22px]" viewBox="0 0 24 22"><path d="M1 5l3-4h5v20H1z" fill="#ef8a2c"/><path d="M9 4l3-3h4v20H9z" fill="#2ba84a"/><path d="M16 5l7-4v16l-7 4z" fill="#2a8ae0"/></svg></div>
      <div class="mt-[22px] w-full h-[32px] flex items-center justify-center"><svg class="w-[25px] h-[25px]" viewBox="0 0 25 25"><path d="M12 1c6 0 11 5 12 12" fill="none" stroke="#4a7ec8" stroke-width="2.500"/><path d="M10 6c5 0 9 4 10 8" fill="none" stroke="#4a7ec8" stroke-width="2"/><circle cx="8" cy="16" r="8" fill="#1a6fd0"/><rect x="7" y="14" width="2.500" height="7" fill="#fff"/><circle cx="8.200" cy="11.500" r="1.500" fill="#fff"/></svg></div>
      <div class="mt-[23px] w-full h-[32px] flex items-center justify-center"><svg class="w-[19px] h-[23px]" viewBox="0 0 19 23"><path d="M1 1h12l5 5v16H1z" fill="#fff" stroke="#2a6fd0" stroke-width="1.200"/><circle cx="9" cy="14" r="5.500" fill="#2a9a9a"/><path d="M6 11c3-1 5 1 6 4l-3 3c-2-1-4-4-3-7z" fill="#7acb6a"/></svg></div>
      <div class="mt-[21px] w-full h-[32px] flex items-center justify-center"><svg class="w-[22px] h-[22px]" viewBox="0 0 22 22"><circle cx="11" cy="11" r="10" fill="#dfe8f5" stroke="#777" stroke-width="1.800"/><path d="M11 4v7h6" fill="none" stroke="#111" stroke-width="1.800"/></svg></div>
      <div class="mt-[10px] w-full h-[32px] flex items-center justify-center"><svg class="w-[21px] h-[23px]" viewBox="0 0 21 23"><defs><linearGradient id="rb" x1="0" y1="0" x2="0" y2="1"><stop offset="0" stop-color="#e8301a"/><stop offset=".3" stop-color="#f0e020"/><stop offset=".6" stop-color="#20c040"/><stop offset="1" stop-color="#1030d0"/></linearGradient></defs><rect x="0" y="0" width="8" height="22" fill="url(#rb)"/><path d="M11 9l8 13" stroke="#111" stroke-width="2.500"/><path d="M9 6l2 2" stroke="#fff" stroke-width="2"/></svg></div>
      <div class="mt-[11px] w-full h-[32px] flex items-center justify-center"><svg class="w-[23px] h-[21px]" viewBox="0 0 23 21"><path d="M3 1h7v17H1z" fill="#3a86d8"/><path d="M12 6h11l-8 6z" fill="#a8c4f0" stroke="#2a6fd0"/><path d="M11 7l7 12" stroke="#111" stroke-width="2.300"/><path d="M0 18h14" stroke="#e0c030" stroke-width="1.500" stroke-dasharray="2 1"/></svg></div>
      <div class="mt-[10px] w-full h-[32px] flex items-center justify-center"><svg class="w-[20px] h-[22px]" viewBox="0 0 20 22"><path d="M4 14l8-8" stroke="#666" stroke-width="3"/><path d="M10 4l8-2-2 4-3 1z" fill="#555"/><path d="M3 8l3 3 8 7-2 2-9-7z" fill="#9a9aa0" stroke="#555" stroke-width=".6"/><path d="M2 18l5 0-2 3H2z" fill="#ef8a2c"/></svg></div>
    </div>

    <!-- part navigator -->
    <div class="w-[384px] shrink-0 bg-white border-r border-[#a9a9a9] flex flex-col pl-[6px] pr-[8px]">
      <div class="h-[30px] shrink-0 flex items-center pl-[4px] text-[15px] leading-none">部件导航器
        <svg class="ml-auto mr-[8px] w-[14px] h-[13px]" viewBox="0 0 14 13"><rect x=".5" y=".5" width="13" height="12" fill="#fff" stroke="#111"/><rect width="14" height="2" fill="#111"/></svg>
      </div>
      <div class="h-[677px] shrink-0 border-2 border-b-0 border-[#dddddd] flex flex-col text-[15px] leading-none relative">
        <div class="h-[23px] shrink-0 grid grid-cols-[200px_100px_64px] bg-[#f0f0f0] border-b border-[#cccccc]">
          <div class="border-r border-[#ddd] flex items-center pl-[6px] pt-[2px]">名称<svg class="ml-[18px] w-[11px] h-[6px]" viewBox="0 0 11 6"><polygon points="0,6 11,6 5.500,0" fill="#222"/></svg></div>
          <div class="border-r border-[#ddd] flex items-center pl-[6px] pt-[2px]">最新</div>
          <div class="flex items-center pl-[6px] pt-[2px]">附注</div>
        </div>
        <div class="flex-1 min-h-0 overflow-hidden relative">
          <!-- dotted tree lines -->
          <svg class="absolute left-0 top-0 w-[60px] h-[290px]" viewBox="0 0 60 290"><path d="M9.500 12v96M9.500 12h9M14 36h5M14 60h5M9.500 84h9M28.500 120v156M28.500 132h9M28.500 156h9M28.500 180h9M28.500 204h9M28.500 228h9M28.500 252h9M28.500 276h9" fill="none" stroke="#888" stroke-dasharray="1 1"/></svg>
          <div class="h-[24px] grid grid-cols-[200px_100px_64px] bg-white border-b border-[#eeeeee]"><div class="relative border-r border-[#eee] flex items-center pl-[19px] pt-[2px]"><svg class="w-[16px] h-[16px]" viewBox="0 0 16 16"><circle cx="8" cy="8" r="7" fill="#eef2f8" stroke="#777" stroke-width="1.500"/><path d="M8 3v5h4" fill="none" stroke="#111" stroke-width="1.300"/></svg><span class="ml-[3px]">历史记录模式</span></div><div class="border-r border-[#eee]"></div></div>
          <div class="h-[24px] grid grid-cols-[200px_100px_64px] bg-[#fafafa] border-b border-[#eeeeee]"><div class="relative border-r border-[#eee] flex items-center pl-[5px] pt-[2px]"><svg class="w-[9px] h-[9px] bg-white" viewBox="0 0 9 9"><path d="M0 4.500h9M4.500 0v9" stroke="#222"/></svg><svg class="ml-[5px] w-[16px] h-[16px]" viewBox="0 0 16 16"><path d="M8 1l6 3v7l-6 3-6-3V4zM2 4l6 3 6-3M8 7v7" fill="none" stroke="#2a9a5a" stroke-width="1.200"/><path d="M7 15l8-2" stroke="#e04a2a" stroke-width="1.300"/></svg><span class="ml-[3px]">模型视图</span></div><div class="border-r border-[#eee]"></div></div>
          <div class="h-[24px] grid grid-cols-[200px_100px_64px] bg-white border-b border-[#eeeeee]"><div class="relative border-r border-[#eee] flex items-center pl-[5px] pt-[2px]"><svg class="w-[9px] h-[9px] bg-white" viewBox="0 0 9 9"><path d="M0 4.500h9M4.500 0v9" stroke="#222"/></svg><svg class="ml-[7px] w-[12px] h-[12px]"><use href="#tick"/></svg><svg class="ml-[3px] w-[15px] h-[14px]" viewBox="0 0 15 14"><path d="M1 5l11-4 2 8-11 4z" fill="#fff" stroke="#d62828" stroke-width="1.300"/><circle cx="8" cy="7" r="2.500" fill="#7a5a9a"/></svg><span class="ml-[3px]">摄像机</span></div><div class="border-r border-[#eee]"></div></div>
          <div class="h-[24px] grid grid-cols-[200px_100px_64px] bg-[#fafafa] border-b border-[#eeeeee]"><div class="relative border-r border-[#eee] flex items-center pl-[19px] pt-[2px]"><svg class="w-[16px] h-[16px]" viewBox="0 0 16 16"><path d="M1 6h5l1-2h7v3H4L1 15z" fill="#f0c550" stroke="#b08820" stroke-width=".7"/><path d="M4 7h12l-3 8H1z" fill="#f7d77a" stroke="#b08820" stroke-width=".7"/><path d="M9 1h5M9 3h5" stroke="#2a4fc8"/></svg><span class="ml-[3px]">用户表达式</span></div><div class="border-r border-[#eee]"></div></div>
          <div class="h-[24px] grid grid-cols-[200px_100px_64px] bg-white border-b border-[#eeeeee]"><div class="relative border-r border-[#eee] flex items-center pl-[5px] pt-[2px]"><svg class="w-[9px] h-[9px] bg-white" viewBox="0 0 9 9"><path d="M0 4.500h9" stroke="#222"/></svg><svg class="ml-[5px] w-[16px] h-[14px]" viewBox="0 0 16 14"><path d="M1 3h5l1-2h6v4H4L1 13z" fill="#f0c550" stroke="#b08820" stroke-width=".7"/><path d="M4 5h12l-3 8H1z" fill="#f7d77a" stroke="#b08820" stroke-width=".7"/></svg><span class="ml-[3px]">模型历史记录</span></div><div class="border-r border-[#eee]"></div></div>
          <div class="h-[24px] grid grid-cols-[200px_100px_64px] bg-[#fafafa] border-b border-[#eeeeee]"><div class="relative border-r border-[#eee] flex items-center pl-[40px] pt-[2px]"><svg class="w-[12px] h-[12px]"><use href="#box"/></svg><svg class="ml-[3px] w-[15px] h-[15px]" viewBox="0 0 15 15"><path d="M3 1v9l10 3M3 10l10-5" fill="none" stroke="#555"/><path d="M3 1l-1 3h2z" fill="#2a4fc8"/><path d="M13 13l-3 0" stroke="#d62828"/></svg><span class="ml-[3px] whitespace-nowrap">基准坐标系 (0)</span></div><div class="border-r border-[#eee] flex items-center pl-[6px]"><svg class="w-[14px] h-[14px]"><use href="#tick"/></svg></div></div>
          <div class="h-[24px] grid grid-cols-[200px_100px_64px] bg-white border-b border-[#eeeeee]"><div class="relative border-r border-[#eee] flex items-center pl-[40px] pt-[2px]"><svg class="w-[12px] h-[12px]"><use href="#box"/></svg><svg class="ml-[3px] w-[15px] h-[15px]"><use href="#sketch"/></svg><span class="ml-[3px] whitespace-nowrap">草图 (1) "SKETC...</span></div><div class="border-r border-[#eee] flex items-center pl-[6px]"><svg class="w-[14px] h-[14px]"><use href="#tick"/></svg></div></div>
          <div class="h-[24px] grid grid-cols-[200px_100px_64px] bg-[#fafafa] border-b border-[#eeeeee]"><div class="relative border-r border-[#eee] flex items-center pl-[40px] pt-[2px]"><svg class="w-[12px] h-[12px]"><use href="#box"/></svg><svg class="ml-[3px] w-[15px] h-[15px]"><use href="#sketch"/></svg><span class="ml-[3px] whitespace-nowrap">草图 (2) "SKETC...</span></div><div class="border-r border-[#eee] flex items-center pl-[6px]"><svg class="w-[14px] h-[14px]"><use href="#tick"/></svg></div></div>
          <div class="h-[24px] grid grid-cols-[200px_100px_64px] bg-white border-b border-[#eeeeee]"><div class="relative border-r border-[#eee] flex items-center pl-[40px] pt-[2px]"><svg class="w-[12px] h-[12px]"><use href="#box"/></svg><svg class="ml-[3px] w-[15px] h-[15px]"><use href="#sketch"/></svg><span class="ml-[3px] whitespace-nowrap">草图 (3) "SKETC...</span></div><div class="border-r border-[#eee] flex items-center pl-[6px]"><svg class="w-[14px] h-[14px]"><use href="#tick"/></svg></div></div>
          <div class="h-[24px] grid grid-cols-[200px_100px_64px] bg-[#fafafa] border-b border-[#eeeeee]"><div class="relative border-r border-[#eee] flex items-center pl-[40px] pt-[2px]"><svg class="w-[12px] h-[12px]"><use href="#box"/></svg><svg class="ml-[3px] w-[15px] h-[15px]"><use href="#spline"/></svg><span class="ml-[3px] whitespace-nowrap">样条 (6)</span></div><div class="border-r border-[#eee] flex items-center pl-[6px]"><svg class="w-[14px] h-[14px]"><use href="#tick"/></svg></div></div>
          <div class="h-[24px] grid grid-cols-[200px_100px_64px] bg-white border-b border-[#eeeeee]"><div class="relative border-r border-[#eee] flex items-center pl-[40px] pt-[2px]"><svg class="w-[12px] h-[12px]"><use href="#box"/></svg><svg class="ml-[3px] w-[15px] h-[15px]"><use href="#spline"/></svg><span class="ml-[3px] whitespace-nowrap">样条 (7)</span></div><div class="border-r border-[#eee] flex items-center pl-[6px]"><svg class="w-[14px] h-[14px]"><use href="#tick"/></svg></div></div>
          <div class="h-[24px] grid grid-cols-[200px_100px_64px] bg-[#fafafa] border-b border-[#eeeeee]"><div class="relative border-r border-[#eee] flex items-center pl-[40px] pt-[2px]"><svg class="w-[12px] h-[12px]"><use href="#box"/></svg><svg class="ml-[3px] w-[15px] h-[13px]"><use href="#mesh"/></svg><span class="ml-[3px] whitespace-nowrap font-bold">通过曲线网格 (1...</span></div><div class="border-r border-[#eee] flex items-center pl-[6px]"><svg class="w-[14px] h-[14px]"><use href="#tick"/></svg></div></div>
          <!-- empty rows -->
          <div class="h-[24px] grid grid-cols-[200px_100px_64px] bg-white border-b border-[#eeeeee]"><div class="border-r border-[#eee]"></div><div class="border-r border-[#eee]"></div></div>
          <div class="h-[24px] grid grid-cols-[200px_100px_64px] bg-[#fafafa] border-b border-[#eeeeee]"><div class="border-r border-[#eee]"></div><div class="border-r border-[#eee]"></div></div>
          <div class="h-[24px] grid grid-cols-[200px_100px_64px] bg-white border-b border-[#eeeeee]"><div class="border-r border-[#eee]"></div><div class="border-r border-[#eee]"></div></div>
          <div class="h-[24px] grid grid-cols-[200px_100px_64px] bg-[#fafafa] border-b border-[#eeeeee]"><div class="border-r border-[#eee]"></div><div class="border-r border-[#eee]"></div></div>
          <div class="h-[24px] grid grid-cols-[200px_100px_64px] bg-white border-b border-[#eeeeee]"><div class="border-r border-[#eee]"></div><div class="border-r border-[#eee]"></div></div>
          <div class="h-[24px] grid grid-cols-[200px_100px_64px] bg-[#fafafa] border-b border-[#eeeeee]"><div class="border-r border-[#eee]"></div><div class="border-r border-[#eee]"></div></div>
          <div class="h-[24px] grid grid-cols-[200px_100px_64px] bg-white border-b border-[#eeeeee]"><div class="border-r border-[#eee]"></div><div class="border-r border-[#eee]"></div></div>
          <div class="h-[24px] grid grid-cols-[200px_100px_64px] bg-[#fafafa] border-b border-[#eeeeee]"><div class="border-r border-[#eee]"></div><div class="border-r border-[#eee]"></div></div>
          <div class="h-[24px] grid grid-cols-[200px_100px_64px] bg-white border-b border-[#eeeeee]"><div class="border-r border-[#eee]"></div><div class="border-r border-[#eee]"></div></div>
          <div class="h-[24px] grid grid-cols-[200px_100px_64px] bg-[#fafafa] border-b border-[#eeeeee]"><div class="border-r border-[#eee]"></div><div class="border-r border-[#eee]"></div></div>
          <div class="h-[24px] grid grid-cols-[200px_100px_64px] bg-white border-b border-[#eeeeee]"><div class="border-r border-[#eee]"></div><div class="border-r border-[#eee]"></div></div>
          <div class="h-[24px] grid grid-cols-[200px_100px_64px] bg-[#fafafa] border-b border-[#eeeeee]"><div class="border-r border-[#eee]"></div><div class="border-r border-[#eee]"></div></div>
          <div class="h-[24px] grid grid-cols-[200px_100px_64px] bg-white border-b border-[#eeeeee]"><div class="border-r border-[#eee]"></div><div class="border-r border-[#eee]"></div></div>
          <div class="h-[24px] grid grid-cols-[200px_100px_64px] bg-[#fafafa] border-b border-[#eeeeee]"><div class="border-r border-[#eee]"></div><div class="border-r border-[#eee]"></div></div>
          <div class="h-[24px] grid grid-cols-[200px_100px_64px] bg-white border-b border-[#eeeeee]"><div class="border-r border-[#eee]"></div><div class="border-r border-[#eee]"></div></div>
        </div>
        <div class="h-[24px] shrink-0 bg-white pt-[3px] pb-[2px]">
          <div class="h-[19px] bg-[#efefef] flex items-center">
            <svg class="ml-[6px] w-[9px] h-[13px]" viewBox="0 0 9 13"><path d="M7 1L2 6.500 7 12" fill="none" stroke="#555" stroke-width="2"/></svg>
            <div class="ml-[6px] w-[292px] h-full bg-[#cccccc]"></div>
            <svg class="ml-[35px] w-[9px] h-[13px]" viewBox="0 0 9 13"><path d="M2 1l5 5.500L2 12" fill="none" stroke="#555" stroke-width="2"/></svg>
          </div>
        </div>
      </div>
      <div class="h-[4px] shrink-0 bg-[#d8d8d8] border border-[#a9a9a9]"></div>
      <div class="h-[29px] shrink-0 border-b-2 border-[#cccccc] flex items-center pl-[7px] pt-[2px] text-[18px] leading-none text-[#1f7a9e]">相依性<svg class="ml-auto mr-[7px] w-[15px] h-[11px]" viewBox="0 0 15 11"><path d="M1 1l6.500 8L14 1" fill="none" stroke="#0f6a85" stroke-width="2.500"/></svg></div>
      <div class="h-[28px] shrink-0 border-b-2 border-[#cccccc] flex items-center pl-[7px] pt-[2px] text-[18px] leading-none text-[#1f7a9e]">细节<svg class="ml-auto mr-[7px] w-[15px] h-[11px]" viewBox="0 0 15 11"><path d="M1 1l6.500 8L14 1" fill="none" stroke="#0f6a85" stroke-width="2.500"/></svg></div>
      <div class="h-[28px] shrink-0 border-b-2 border-[#cccccc] flex items-center pl-[7px] pt-[2px] text-[18px] leading-none text-[#1f7a9e]">预览<svg class="ml-auto mr-[7px] w-[15px] h-[11px]" viewBox="0 0 15 11"><path d="M1 1l6.500 8L14 1" fill="none" stroke="#0f6a85" stroke-width="2.500"/></svg></div>
    </div>

    <!-- graphics window -->
    <div class="flex-1 relative overflow-hidden bg-[linear-gradient(180deg,#b2b3b5_0%,#c4c5c7_25%,#d8d9db_50%,#e4e5e7_72%,#e6e7e9_100%)]">
      <svg class="absolute inset-0 w-full h-full" viewBox="416 205 1504 802">
        <defs>
          <linearGradient id="blade" gradientUnits="userSpaceOnUse" x1="0" y1="100" x2="0" y2="1490">
            <stop offset="0" stop-color="#ffff00"/>
            <stop offset=".2" stop-color="#fdfd00"/>
            <stop offset=".42" stop-color="#dcd800"/>
            <stop offset=".65" stop-color="#cbc700"/>
            <stop offset="1" stop-color="#aea800"/>
          </linearGradient>
        </defs>
        <g transform="translate(780 390) scale(.3333 .4139)" fill="none" stroke-linejoin="round" stroke-linecap="round">
          <path fill="url(#blade)" d="M108 690L118 688 160 625 200 570 250 520 300 470 380 410 470 345 560 292 650 245 750 205 850 172 950 147 1050 130 1170 122 1197 88 1090 280 940 530 935 535 870 590 800 650 700 745 620 850 560 935 500 1020 465 1095 435 1180 405 1300 390 1380 382 1490 315 1490 205 1110Z"/>
          <path fill="#ffff00" d="M1197 88L915 478 940 530 1090 280ZM108 690L122 700 215 1110 330 1490 315 1490 205 1110Z"/>
          <g stroke="#4f6ff0">
            <path vector-effect="non-scaling-stroke" stroke-width="2" d="M118 688Q105 692 100 680L130 620 165 555 210 490 270 420 350 345 430 285 510 235 640 170 760 122 880 88 1000 65 1090 52 1140 48Q1175 50 1190 72L1197 88 1170 122"/>
            <path vector-effect="non-scaling-stroke" stroke-width="1.500" d="M118 688L160 625 200 570 250 520 300 470 380 410 470 345 560 292 650 245 750 205 850 172 950 147 1050 130 1170 122"/>
            <path vector-effect="non-scaling-stroke" stroke-width="2" d="M215 1105Q200 1115 195 1098L225 990 280 860 340 760 410 660 510 545 610 450 720 365 850 285 990 222C1030 205 1075 222 1092 245L1097 265 1092 280"/>
            <path vector-effect="non-scaling-stroke" stroke-width="1.200" d="M215 1105L270 980 330 880 400 780 500 675 600 580 700 505 800 440 910 380 1030 320"/>
            <path vector-effect="non-scaling-stroke" stroke-width="2" d="M340 1490L338 1420 345 1310 370 1150 410 1040 455 940 520 820 600 710 700 590 800 490C825 465 880 458 915 478C932 490 940 510 935 535"/>
            <path vector-effect="non-scaling-stroke" stroke-width="2" d="M382 1490L390 1380 405 1300 435 1180 465 1095 500 1020 560 935 620 850 700 745 800 650 870 590 935 535"/>
          </g>
          <path vector-effect="non-scaling-stroke" stroke="#ff00ff" stroke-width="1.800" d="M108 690L205 1110 315 1490M1197 88L915 478"/>
          <path vector-effect="non-scaling-stroke" stroke="#8ea0f0" stroke-width="1" d="M984 498H1010M997 488V510"/>
          <path vector-effect="non-scaling-stroke" stroke="#5474ee" stroke-width="1" d="M808 475H832M820 463V487"/>
          <g stroke="#1414e0">
            <path vector-effect="non-scaling-stroke" stroke-width="1" d="M405 1055L805 1108M595 1083L593 1005 790 1030 795 1108 752 1248 555 1222 595 1083M790 965V1040L750 1175 752 1248 720 1370"/>
          </g>
          <path fill="#0b0bb0" d="M410 1053L447 1050 447 1068ZM790 958L800 972 797 982H781L780 972ZM716 1352H734L720 1385Z"/>
        </g>
        <g font-family="'Liberation Sans',sans-serif" fill="#1414e0" font-size="13">
          <text x="1042" y="789" text-anchor="middle" font-size="14">Z</text>
          <text x="907" y="832" text-anchor="middle" font-size="14">Y</text>
          <text x="1017" y="976" text-anchor="middle" font-size="14">X</text>
        </g>
        <!-- view triad -->
        <g transform="translate(0 860) scale(.3333)">
          <path d="M1362 195L1440 210 1420 310 1348 295ZM1350 250L1428 268M1362 195L1350 250 1348 295" fill="#d0d0d2" stroke="#a8a8aa" stroke-width="3"/>
          <path d="M1310 222L1340 218 1340 226 1435 238 1435 248 1340 234Z" fill="#3aa53a"/>
          <path d="M1440 165L1450 195 1443 195 1443 240 1437 240 1437 195 1430 195Z" fill="#1a3fe0"/>
          <path d="M1443 250L1424 325 1430 325 1414 360 1410 320 1416 322 1435 248Z" fill="#a61e2a"/>
          <circle cx="1441" cy="243" r="11" fill="#f2f2f2" stroke="#aaa"/>
        </g>
        <g font-family="'Liberation Sans',sans-serif" font-size="12">
          <text x="432" y="938" text-anchor="middle" fill="#5a9a5a">Y</text>
          <text x="479" y="924" text-anchor="middle" fill="#1a3fe0">Z</text>
          <text x="470" y="988" text-anchor="middle" fill="#c83a4a">X</text>
        </g>
      </svg>
      <!-- floating counter, clipped by the window edge -->
      <div class="absolute left-[1478px] top-[215px] w-[56px] h-[56px] rounded-full bg-[#43c35a] border-[4px] border-[#f2f2f2] shadow-[0_4px_8px_rgba(0,0,0,.3)] flex items-center pl-[6px] text-white text-[14px] font-bold font-['Liberation_Serif',serif]">71</div>
      <!-- input method bar -->
      <div class="absolute left-[943px] top-[597px] w-[226px] h-[29px] bg-[#f8fbff] border border-[#c3d4e6] shadow-sm flex items-center pl-[13px] gap-[9px] text-[#2377cc]">
        <span class="w-[18px] text-[17px] leading-none font-bold text-center font-['Noto_Sans_CJK_SC',sans-serif]">中</span>
        <svg class="w-[18px] h-[18px]" viewBox="0 0 18 18"><path d="M12 1c2 6-2 12-10 12 3 4 14 4 15-4 0-4-2-6-5-8z" fill="#2377cc"/></svg>
        <svg class="w-[18px] h-[18px]" viewBox="0 0 18 18"><circle cx="4" cy="5" r="2" fill="none" stroke="#2377cc" stroke-width="1.500"/><path d="M13 10h2.500c.5 3-.5 5-2.500 6.500 0-2 .5-3 0-3.500z" fill="#2377cc"/></svg>
        <svg class="w-[18px] h-[20px]" viewBox="0 0 18 20"><rect x="6" y="0" width="7" height="13" rx="3.500" fill="#2377cc"/><path d="M3 8c0 9 13 9 13 0M9.500 15v4M6 19h7" fill="none" stroke="#2377cc" stroke-width="1.500"/></svg>
        <svg class="w-[18px] h-[14px]" viewBox="0 0 18 14"><rect width="18" height="14" rx="2" fill="#2377cc"/><path d="M2 4h14M2 7h14" stroke="#fff" stroke-dasharray="1.500 1" stroke-width="1.500"/><rect x="4" y="10" width="10" height="2" fill="#fff"/></svg>
        <svg class="w-[18px] h-[18px]" viewBox="0 0 18 18"><circle cx="8" cy="5" r="4" fill="#bcc7d6"/><path d="M2 17c0-5 3-7 6-7s6 2 6 7z" fill="#bcc7d6"/><rect x="11" y="11" width="6" height="6" fill="#fff" stroke="#999"/></svg>
        <svg class="w-[18px] h-[18px]" viewBox="0 0 18 18"><path d="M5 1L0 4l2 5 2-1v9h10V8l2 1 2-5-5-3c-1 2-7 2-8 0z" fill="#2377cc"/></svg>
        <svg class="w-[18px] h-[18px]" viewBox="0 0 18 18"><path d="M17 3l-3 3-2-1-1-2 3-3c-3-1-6 2-5 5L1 13c-1 2 2 5 4 4l7-8c3 1 6-2 5-6z" fill="#2377cc"/></svg>
      </div>
      <div class="absolute left-[916px] top-[593px] w-[33px] h-[33px] rotate-[-8deg] rounded-[4px] bg-[#f2531c] flex items-center justify-center text-white text-[30px] leading-none font-bold font-['Liberation_Sans',sans-serif]">S</div>
    </div>
  </div>

  <!-- status bar -->
  <div class="h-[23px] shrink-0 bg-white border-t border-[#a9a9a9] flex items-center pl-[3px] pb-[2px] text-[14px] leading-none font-medium text-[#111]">选择对象并使用 MB3，或者双击某一对象
    <svg class="absolute left-[1830px] top-[1013px] w-[15px] h-[13px]" viewBox="0 0 15 13"><rect width="15" height="13" fill="#c8c8c8"/><path d="M2 2l4 3 2-2 2 4 3-3M3 10l4-4 5 5" stroke="#777" fill="none"/></svg>
    <svg class="absolute left-[1850px] top-[1011px] w-[15px] h-[15px]" viewBox="0 0 15 15"><path d="M1 4V1h3M11 1h3v3M1 11v3h3M14 11v3h-3" fill="none" stroke="#777"/><rect x="3" y="3" width="9" height="9" fill="#fff" stroke="#333"/><rect x="4" y="5" width="7" height="6" fill="#6b8fd0"/></svg>
  </div>

  <!-- taskbar sliver -->
  <div class="h-[9px] shrink-0 flex bg-[#233c4a]">
    <div class="w-[60px]"></div>
    <div class="w-[430px] bg-[#3c545c]"></div>
    <div class="ml-[1025px] flex-1 bg-[#26404e] flex items-end pl-[273px] gap-[3px]"><i class="w-[38px] h-[2px] bg-white"></i></div>
  </div>

  <!-- site watermark over the window corner -->
  <svg class="absolute left-[1610px] top-[930px] w-[310px] h-[109px]" viewBox="1610 930 310 109">
    <path d="M1661 937L1703 962V1010L1661 1034 1620 1010V962Z" fill="#72c5ec" fill-opacity=".95" stroke="#fff" stroke-width="2"/>
    <path d="M1661 937L1620 962V1010L1645 1024C1635 1000 1625 985 1650 965L1691 972C1690 955 1675 945 1661 937Z" fill="#6d9fd6"/>
    <path d="M1661 961L1681 973V997L1661 1009 1641 997V973Z" fill="#72c5ec" stroke="#fff" stroke-width="4"/>
    <path d="M1661 966L1677 975 1661 985 1644 975Z M1644 975L1661 985V1005L1644 995Z" fill="#6d9fd6" stroke="#dceaf6" stroke-width=".7"/>
    <text x="1712" y="995" font-size="47" font-weight="700" fill="#72c5ec" stroke="#ffffff" stroke-width="1.500" paint-order="stroke" textLength="200" font-family="'Noto Sans CJK SC',sans-serif">3D世界网</text>
    <text x="1714" y="1015" font-size="12" font-weight="700" fill="#8fd2f0" textLength="196" font-family="'Liberation Sans',sans-serif">WWW.3DSJW.COM</text>
  </svg>
</div>
</body>
</html>
